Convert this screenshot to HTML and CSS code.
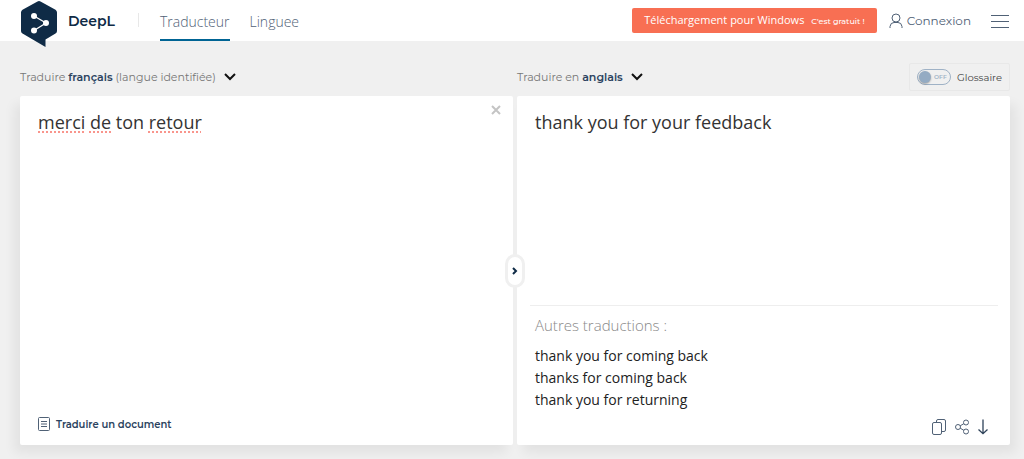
FILE: index.html
```
<!DOCTYPE html>
<html lang="fr">
<head>
    <meta charset="UTF-8">
    <title>DeepL Traducteur</title>
    <link rel="stylesheet" href="styles.css">
</head>
<body>
    <header class="header">
        <a class="logo" href="#">
            <svg class="logo-mark" width="38" height="47" viewBox="0 0 38 47" aria-hidden="true">
                <path d="M17.5 1.4Q19 .6 20.5 1.4L35.5 9.8Q37 10.7 37 12.5V31Q37 32.700 35.500 33.600L25.500 39.500V47L2.500 33.600Q1 32.700 1 31V12.500Q1 10.700 2.500 9.800Z" fill="#0f2b46"/>
                <path d="M14 16L26 23L14 30.500" fill="none" stroke="#fff" stroke-width="1.300"/>
                <circle cx="14" cy="16" r="3" fill="#fff"/>
                <circle cx="26" cy="23" r="3" fill="#fff"/>
                <circle cx="14" cy="30.500" r="3" fill="#fff"/>
            </svg>
            <span class="logo-name">DeepL</span>
        </a>
        <nav class="nav">
            <a class="nav-link selected" href="#">Traducteur</a>
            <a class="nav-link" href="#">Linguee</a>
        </nav>
        <a class="download" href="#">Téléchargement pour Windows <small>C'est gratuit !</small></a>
        <a class="login" href="#">
            <svg width="14" height="15" viewBox="0 0 14 15" fill="none" stroke="#506176" aria-hidden="true">
                <circle cx="7" cy="5" r="4"/>
                <path d="M1 15V13.500Q1.500 9.500 5 9.500H9Q12.500 9.500 13 13.500V15"/>
            </svg>
            Connexion
        </a>
        <button class="menu" type="button" aria-label="Menu">
            <svg width="18" height="14" viewBox="0 0 18 14" stroke="#506176" aria-hidden="true">
                <path d="M0 1.500H18M0 7.500H18M0 13.500H18"/>
            </svg>
        </button>
    </header>

    <main class="translator">
        <section class="side source">
            <div class="bar">
                <button class="lang" type="button">
                    <span>Traduire <strong>français</strong> (langue identifiée)</span>
                    <svg width="12" height="8" viewBox="0 0 12 8" aria-hidden="true"><path d="M1 1L6 6L11 1" fill="none" stroke="#111" stroke-width="2"/></svg>
                </button>
            </div>
            <div class="panel">
                <div class="editor">
                    <div class="spelling" aria-hidden="true"><u>merci</u> <u>de</u> ton <u>retour</u></div>
                    <textarea class="text" aria-label="Texte source" spellcheck="false">merci de ton retour</textarea>
                    <button class="clear" type="button" aria-label="Effacer">
                        <svg width="10" height="10" viewBox="0 0 10 10" aria-hidden="true"><path d="M1 1L9 9M9 1L1 9" stroke="#c4c4c4" stroke-width="2"/></svg>
                    </button>
                </div>
                <button class="document" type="button">
                    <svg width="12" height="14" viewBox="0 0 12 14" fill="none" stroke="#506176" aria-hidden="true">
                        <rect x=".5" y=".5" width="11" height="13" rx="1"/>
                        <path d="M3 4.500H9M3 7H9M3 9.500H9"/>
                    </svg>
                    Traduire un document
                </button>
            </div>
        </section>

        <section class="side target">
            <div class="bar">
                <button class="lang" type="button">
                    <span>Traduire en <strong>anglais</strong></span>
                    <svg width="12" height="8" viewBox="0 0 12 8" aria-hidden="true"><path d="M1 1L6 6L11 1" fill="none" stroke="#111" stroke-width="2"/></svg>
                </button>
                <label class="glossary">
                    <span class="switch">
                        <input type="checkbox">
                        <span class="switch-state">OFF</span>
                    </span>
                    Glossaire
                </label>
            </div>
            <div class="panel">
                <div class="editor">
                    <textarea class="text" aria-label="Traduction" readonly>thank you for your feedback</textarea>
                </div>
                <div class="others">
                    <h2>Autres traductions :</h2>
                    <ul>
                        <li><button type="button">thank you for coming back</button></li>
                        <li><button type="button">thanks for coming back</button></li>
                        <li><button type="button">thank you for returning</button></li>
                    </ul>
                </div>
                <div class="tools">
                    <button type="button" aria-label="Copier">
                        <svg width="14" height="16" viewBox="0 0 14 16" fill="none" stroke="#506176" aria-hidden="true">
                            <rect x=".5" y="3.500" width="9" height="12" rx="1.500"/>
                            <path d="M4.500 3.500V2Q4.500 .5 6 .5H12Q13.500 .5 13.500 2V11Q13.500 12.500 12 12.500H9.500"/>
                        </svg>
                    </button>
                    <button type="button" aria-label="Partager">
                        <svg width="14" height="16" viewBox="0 0 14 16" fill="none" stroke="#506176" aria-hidden="true">
                            <circle cx="3" cy="8" r="2.500"/>
                            <circle cx="11" cy="3.500" r="2.500"/>
                            <circle cx="11" cy="12.500" r="2.500"/>
                            <path d="M5.200 6.800L8.800 4.700M5.200 9.200L8.800 11.300"/>
                        </svg>
                    </button>
                    <button type="button" aria-label="Télécharger">
                        <svg width="10" height="16" viewBox="0 0 10 16" fill="none" stroke="#2f435a" stroke-width="1.300" aria-hidden="true">
                            <path d="M5 .5V14.500M.5 10.500L5 14.700L9.500 10.500"/>
                        </svg>
                    </button>
                </div>
            </div>
        </section>

        <button class="resize" type="button" aria-label="Agrandir">
            <svg width="6" height="8" viewBox="0 0 6 8" aria-hidden="true"><path d="M1 1L4 4L1 7" fill="none" stroke="#0f2b46" stroke-width="2"/></svg>
        </button>
    </main>
</body>
</html>
```
FILE: styles.css
```
*{
    margin: 0;
    padding: 0;
    box-sizing: border-box;
}
body{
    background: #f0f0f0;
    color: #333;
    font-family: "Montserrat", "Inter", sans-serif;
    font-size: 12px;
}
a{
    color: inherit;
    text-decoration: none;
}
ul{
    list-style: none;
}
button{
    display: flex;
    align-items: center;
    border: 0;
    background: none;
    color: inherit;
    font: inherit;
    cursor: pointer;
}
svg{
    display: block;
    flex: none;
}

/* header */
.header{
    display: flex;
    align-items: center;
    height: 41px;
    padding: 0 15px 0 20px;
    background: #fff;
    color: #506176;
}
.logo{
    display: flex;
    align-items: flex-start;
    gap: 10px;
    height: 41px;
    color: #0f2b46;
}
.logo-mark{
    position: relative;
}
.logo-name{
    font-size: 14px;
    font-weight: 600;
    line-height: 42px;
}
.nav{
    display: flex;
    gap: 20px;
    margin-left: 23px;
    padding-left: 22px;
    background: linear-gradient(#e8e8e8, #e8e8e8) 0 13px / 1px 14px no-repeat;
    font-family: "Open Sans", sans-serif;
    font-size: 14px;
    font-weight: 300;
}
.nav-link{
    height: 41px;
    line-height: 43px;
}
.nav .selected{
    border-bottom: 2px solid #006494;
}
.download{
    margin-left: auto;
    padding: 0 12px;
    border-radius: 2px;
    background: #f86f53;
    color: #fff;
    font-family: "Open Sans", sans-serif;
    font-size: 11px;
    font-weight: 500;
    line-height: 24px;
}
.download small{
    margin-left: 4px;
    font-family: "Montserrat", "Inter", sans-serif;
    font-size: 8px;
}
.login{
    display: flex;
    align-items: center;
    gap: 4px;
    margin-left: 12px;
    font-size: 12px;
}
.menu{
    margin-left: 20px;
}

/* translator */
.translator{
    position: relative;
    display: grid;
    grid-template-columns: 1fr 1fr;
    gap: 4px;
    padding: 0 14px 14px 20px;
}
.side{
    display: flex;
    flex-direction: column;
    min-width: 0;
}
.bar{
    display: flex;
    align-items: center;
    justify-content: space-between;
    height: 55px;
    padding-top: 17px;
    color: #777;
}
.lang{
    gap: 8px;
    font-size: 11px;
}
.lang strong{
    color: #2b4360;
    font-weight: 600;
}
.glossary{
    display: flex;
    align-items: center;
    gap: 6px;
    height: 28px;
    padding: 0 7px;
    border: 1px solid #e8e8e8;
    border-radius: 2px;
    color: #444;
    font-size: 10px;
    cursor: pointer;
}
.switch{
    display: flex;
    align-items: center;
    gap: 3px;
    width: 34px;
    height: 16px;
    padding: 0 1px;
    border: 1px solid #9fb2c6;
    border-radius: 8px;
    color: #9fb2c6;
}
.switch input{
    appearance: none;
    width: 12px;
    height: 12px;
    border-radius: 50%;
    background: #94abc3;
    box-shadow: 0 1px 2px rgba(0,0,0,.3);
}
.switch-state{
    font-size: 6px;
    font-weight: 600;
}
.panel{
    display: flex;
    flex-direction: column;
    flex: 1;
    min-height: 349px;
    border-radius: 2px;
    background: #fff;
}
/* shadows lean outwards so the gutter stays clean */
.source .panel{
    box-shadow: -6px 8px 12px rgba(0,0,0,.06);
}
.target .panel{
    box-shadow: 6px 8px 12px rgba(0,0,0,.06);
}
.editor{
    position: relative;
    display: flex;
    flex: 1;
}
.text,.spelling{
    flex: 1;
    min-width: 0;
    padding: 13px 40px 13px 18px;
    border: 0;
    background: none;
    color: #333;
    font-family: "Open Sans", sans-serif;
    font-size: 18px;
    line-height: 26px;
    resize: none;
    outline: none;
}
/* underlines lie under the textarea */
.spelling{
    position: absolute;
    top: 0;
    left: 0;
    right: 0;
    color: transparent;
}
.spelling u{
    text-decoration: underline dotted #f9958c 2px;
    text-decoration-skip-ink: none;
    text-underline-offset: 2px;
}
.text{
    position: relative;
}
.clear{
    position: absolute;
    top: 9px;
    right: 12px;
}
.document{
    gap: 6px;
    align-self: flex-start;
    margin: 0 18px 14px;
    color: #2b4360;
    font-size: 10px;
    font-weight: 600;
}
.others{
    margin: 0 12px 0 13px;
    padding: 8px 5px 0;
    border-top: 1px solid #eee;
    font-family: "Open Sans", sans-serif;
}
.others h2{
    margin-bottom: 9px;
    color: #888;
    font-size: 15px;
    font-weight: 300;
    line-height: 22px;
}
.others li button{
    font-size: 14px;
    line-height: 22px;
    color: #222;
}
.tools{
    display: flex;
    justify-content: flex-end;
    gap: 9px;
    padding: 8px 22px 10px;
}
.resize{
    position: absolute;
    top: 213px;
    left: calc(50% + 3px);
    transform: translateX(-50%);
    justify-content: center;
    width: 20px;
    height: 34px;
    border: 3px solid #f0f0f0;
    border-radius: 10px;
    background: #fff;
}
```
